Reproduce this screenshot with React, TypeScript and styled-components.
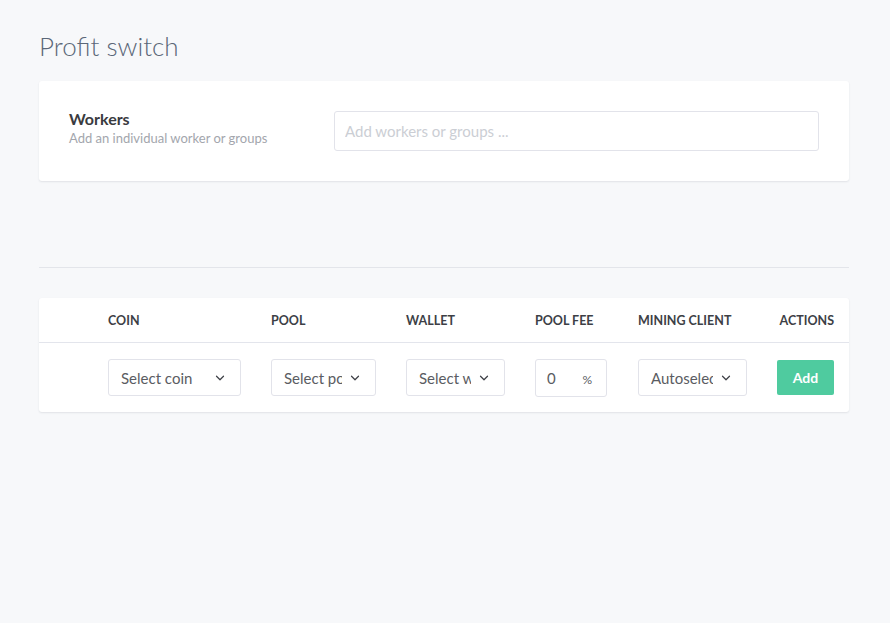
import React from "react"
import styled, { createGlobalStyle } from "styled-components"
import { ChevronDown } from "lucide-react"

const GlobalStyle = createGlobalStyle`
  html, body {
    margin: 0;
    padding: 0;
    background: #f7f8fa;
    font-family: Lato, "Open Sans", sans-serif;
  }
  * { box-sizing: border-box; }
`

const Page = styled.div`
  padding: 29px 41px 0 39px;
  min-height: 623px;
`

const PageTitle = styled.h1`
  margin: 0 0 18px 0;
  font-size: 26px;
  font-weight: 300;
  color: #5b6778;
  line-height: 34px;
`

const Card = styled.div`
  background: #fff;
  border-radius: 3px;
  box-shadow: 0 1px 2px rgba(30, 40, 60, 0.1);
`

const WorkersCard = styled(Card)`
  display: flex;
  align-items: center;
  height: 100px;
  padding: 0 30px;
`

const WorkersText = styled.div`
  width: 265px;
  flex-shrink: 0;
  margin-top: -6px;
`

const WorkersTitle = styled.div`
  font-size: 16px;
  font-weight: 700;
  color: #3a3b40;
  line-height: 20px;
`

const WorkersHint = styled.div`
  font-size: 13px;
  color: #a3a6ad;
  line-height: 18px;
`

const TextInput = styled.input`
  flex: 1;
  height: 40px;
  border: 1px solid #e2e3ea;
  border-radius: 3px;
  padding: 0 10px;
  font-family: inherit;
  font-size: 15px;
  color: #555;
  outline: none;
  &::placeholder {
    color: #cbced4;
  }
`

const Divider = styled.hr`
  margin: 86px 0 30px 0;
  border: 0;
  border-top: 1px solid #e3e5ea;
`

const COLS = "69px 163px 135px 129px 103px 139px 72px"

const HeadRow = styled.div`
  display: grid;
  grid-template-columns: ${COLS};
  align-items: center;
  height: 45px;
  border-bottom: 1px solid #e3e5ec;
`

const HeadCell = styled.div<{ $right?: boolean }>`
  font-size: 12.5px;
  font-weight: 700;
  color: #3d3f46;
  text-transform: uppercase;
  text-align: ${(p) => (p.$right ? "right" : "left")};
  padding-right: ${(p) => (p.$right ? "15px" : "0")};
`

const BodyRow = styled.div`
  display: grid;
  grid-template-columns: ${COLS};
  align-items: center;
  height: 69px;
`

const SelectBox = styled.div<{ $w: number }>`
  width: ${(p) => p.$w}px;
  height: 37px;
  border: 1px solid #e2e3ea;
  border-radius: 3px;
  display: flex;
  align-items: center;
  padding: 0 13px 0 12px;
  gap: 6px;
  color: #5a5c62;
  font-size: 15px;
`

const SelectLabel = styled.span`
  flex: 1;
  white-space: nowrap;
  overflow: hidden;
  text-overflow: clip;
`

const FeeBox = styled.div`
  width: 72px;
  height: 38px;
  border: 1px solid #e2e3ea;
  border-radius: 3px;
  display: flex;
  align-items: center;
  padding: 0 14px 0 11px;
  color: #5a5c62;
  font-size: 15px;
`

const FeeValue = styled.span`
  flex: 1;
`

const FeeUnit = styled.span`
  font-size: 12px;
  padding-top: 3px;
`

const AddButton = styled.button`
  width: 57px;
  height: 35px;
  border: 0;
  border-radius: 2px;
  background: #4fcb9f;
  color: #fff;
  font-family: inherit;
  font-size: 14px;
  font-weight: 700;
`

function Select({ label, width }: { label: string; width: number }) {
  return (
    <SelectBox $w={width}>
      <SelectLabel>{label}</SelectLabel>
      <ChevronDown size={14} strokeWidth={2.1} color="#3d3f46" />
    </SelectBox>
  )
}

export default function App() {
  return (
    <>
      <GlobalStyle />
      <Page>
        <PageTitle>Profit switch</PageTitle>
        <WorkersCard>
          <WorkersText>
            <WorkersTitle>Workers</WorkersTitle>
            <WorkersHint>Add an individual worker or groups</WorkersHint>
          </WorkersText>
          <TextInput placeholder="Add workers or groups ..." />
        </WorkersCard>
        <Divider />
        <Card>
          <HeadRow>
            <div />
            <HeadCell>Coin</HeadCell>
            <HeadCell>Pool</HeadCell>
            <HeadCell>Wallet</HeadCell>
            <HeadCell>Pool fee</HeadCell>
            <HeadCell>Mining client</HeadCell>
            <HeadCell $right>Actions</HeadCell>
          </HeadRow>
          <BodyRow>
            <div />
            <Select label="Select coin" width={133} />
            <Select label="Select pool" width={105} />
            <Select label="Select wallet" width={99} />
            <FeeBox>
              <FeeValue>0</FeeValue>
              <FeeUnit>%</FeeUnit>
            </FeeBox>
            <Select label="Autoselect" width={109} />
            <AddButton>Add</AddButton>
          </BodyRow>
        </Card>
      </Page>
    </>
  )
}
